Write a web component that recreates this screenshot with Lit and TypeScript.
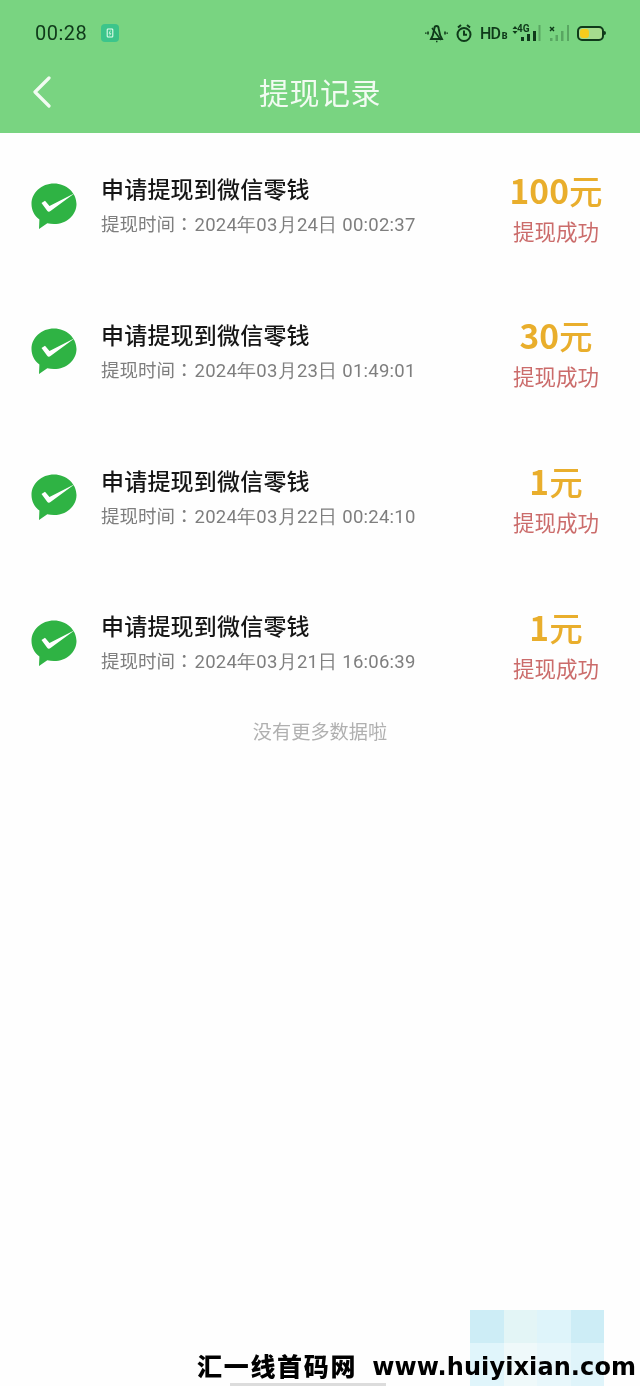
import { LitElement, html, css } from "lit";
import { customElement } from "lit/decorators.js";

const records = [
  { time: "2024年03月24日 00:02:37", amount: "100" },
  { time: "2024年03月23日 01:49:01", amount: "30" },
  { time: "2024年03月22日 00:24:10", amount: "1" },
  { time: "2024年03月21日 16:06:39", amount: "1" },
];

const wechat = html`<svg class="wx" viewBox="0 0 46 46" width="46" height="46">
  <path fill="#2fb344" d="M23 .5C10.500.5.500 9.600.500 21c0 6.300 3 11.800 7.900 15.600L8 46l8.300-5.700c2.100.5 4.400.8 6.700.8 12.500 0 22.500-9 22.500-20.100S35.500.5 23 .5z"/>
  <path fill="#fff" d="M10.500 20l3.500-2.200 4.500 5.300L44 10 19.500 28c-1.300 1-2.500.8-3.300-.3z"/>
</svg>`;

const statusIcons = html`<svg class="si" viewBox="0 0 150 24" width="150" height="24" fill="none" stroke="#0f3a1a">
  <g stroke-width="1.900">
    <path d="M6 18h11l-1.800-3.500-1.700-7.500a2 2 0 0 0-4 0l-1.700 7.500z"/>
    <path d="M7 7l9 12M11 20.500h1.500" stroke-width="1.600"/>
    <path d="M3 10.500v3M.8 11.500v1.200M20 10.500v3M22.200 11.500v1.200" stroke-width="1.600"/>
  </g>
  <g stroke-width="2">
    <circle cx="39" cy="13.500" r="6.500"/>
    <path d="M39 9.500v4.300h3M33 6.500l3-2.500M45 6.500l-3-2.500"/>
  </g>
  <g fill="#0f3a1a" stroke="none">
    <path d="M87.500 8l2.500-3 2.500 3zM87.500 10l2.500 3 2.500-3z"/>
    <rect x="96" y="16" width="3" height="4"/><rect x="102" y="13" width="3" height="7"/><rect x="108" y="10" width="3" height="10"/>
    <rect x="113.500" y="4" width="2" height="16" opacity=".3"/>
    <path d="M124.500 6.500l1-1 1.500 1.500 1.500-1.500 1 1-1.500 1.500 1.500 1.500-1 1-1.500-1.500-1.500 1.500-1-1 1.500-1.500z"/>
    <rect x="125" y="17" width="2.500" height="3" opacity=".3"/><rect x="130.500" y="14" width="2.500" height="6" opacity=".3"/><rect x="136" y="10" width="2.500" height="10" opacity=".3"/><rect x="142" y="4" width="2" height="16" opacity=".3"/>
  </g>
</svg>`;

@customElement("app-root")
export class AppRoot extends LitElement {
  static styles = css`
    :host {
      display: block;
      position: relative;
      width: 640px;
      height: 1386px;
      overflow: hidden;
      background: #fefefe;
      font-family: "Noto Sans CJK SC", "Noto Sans", sans-serif;
      filter: blur(0.3px);
    }
    header {
      height: 133px;
      background: #79d481;
      display: flex;
      flex-direction: column;
    }
    .status {
      height: 66px;
      display: flex;
      align-items: center;
      padding: 0 36px 0 35px;
      color: #0f3a1a;
    }
    .clock {
      font: 20px/24px Roboto, sans-serif;
      letter-spacing: 0.5px;
    }
    .pill {
      margin-left: 14px;
      width: 18px;
      height: 18px;
      border-radius: 4px;
      background: #3cc58b;
      display: flex;
      align-items: center;
      justify-content: center;
    }
    .spacer { flex: 1; }
    .icons { position: relative; display: flex; align-items: center; }
    .hd {
      position: absolute;
      left: 55px;
      top: 3px;
      font: 500 16px/20px Roboto, sans-serif;
      letter-spacing: -0.8px;
    }
    .hd small { font-size: 9px; font-weight: 900; margin-left: 1.500px; letter-spacing: 0; }
    .fourg {
      position: absolute;
      left: 92px;
      top: 2px;
      font: 700 10px/12px Roboto, sans-serif;
    }
    .battery {
      width: 21px;
      height: 9px;
      border: 2px solid #0f3a1a;
      border-radius: 5px;
      padding: 1px;
      margin: 1px 0 0 2px;
      position: relative;
      display: flex;
      background: #a5dc8e;
    }
    .battery::after {
      content: "";
      position: absolute;
      right: -3.500px;
      top: 2.500px;
      width: 1.500px;
      height: 4px;
      background: #0f3a1a;
      border-radius: 0 2px 2px 0;
    }
    .charge {
      width: 9px;
      background: #f6cb1c;
      border-radius: 3px;
    }
    .nav {
      position: relative;
      flex: 1;
      display: flex;
      align-items: center;
      justify-content: center;
      padding-bottom: 17px;
    }
    .back {
      position: absolute;
      left: 32px;
      top: 10px;
    }
    h1 {
      margin: 0;
      font-size: 30px;
      line-height: 40px;
      font-weight: 400;
      letter-spacing: 0.5px;
      color: #f2fbf2;
    }
    .row {
      height: 145.67px;
      display: flex;
      align-items: center;
      padding: 0 39px 0 31px;
      box-sizing: border-box;
    }
    .wx { flex: none; }
    .main { margin-left: 24px; flex: 1; }
    .title {
      font-size: 23px;
      line-height: 30px;
      font-weight: 500;
      letter-spacing: 0.2px;
      color: #161616;
      margin-bottom: 7px;
    }
    .time {
      font-size: 18.500px;
      line-height: 26px;
      color: #7e7e7e;
      white-space: nowrap;
    }
    .time .colon { font-family: "Noto Sans CJK TC", sans-serif; }
    .time .num { font-family: Roboto, sans-serif; letter-spacing: 0.25px; margin-left: 1px; }
    .side {
      width: 90px;
      display: flex;
      flex-direction: column;
      align-items: center;
      padding-top: 5px;
    }
    .amount {
      font-size: 33.500px;
      line-height: 38px;
      font-weight: 700;
      color: #e9ae2c;
      white-space: nowrap;
    }
    .amount span { font-weight: 500; }
    .state {
      font-size: 21.500px;
      line-height: 30px;
      color: #cb6c6b;
      margin-top: 7px;
    }
    .more {
      text-align: center;
      font-size: 19.200px;
      line-height: 24px;
      color: #b0b0b0;
      margin-top: 3px;
    }
    .tiles {
      position: absolute;
      left: 470px;
      top: 1310px;
      width: 134px;
      height: 76px;
      display: grid;
      grid-template-columns: repeat(4, 1fr);
      grid-template-rows: 33px 1fr;
    }
    .tiles i { display: block; }
    .mark {
      position: absolute;
      left: 197px;
      bottom: 4px;
      display: flex;
      align-items: flex-start;
      color: #000;
      white-space: nowrap;
    }
    .mark b {
      font-size: 25px;
      line-height: 30px;
      font-weight: 900;
      letter-spacing: 1.700px;
    }
    .mark span {
      margin: 2.500px 0 0 15px;
      font: 700 24px/30px "DejaVu Sans", sans-serif;
      letter-spacing: 0.1px;
    }
    .home {
      position: absolute;
      left: 230px;
      bottom: 0;
      width: 156px;
      height: 3px;
      background: #dcdcdc;
    }
  `;

  render() {
    const tiles = ["#cdedf6","#e3f5f6","#def4fa","#cdedf6","#e0f5fb","#eff9fa","#e8f7fb","#dff4fa"];
    return html`
      <header>
        <div class="status">
          <span class="clock">00:28</span>
          <span class="pill"><svg viewBox="0 0 10 12" width="8" height="10" fill="none" stroke="#e8fff0" stroke-width="1.300"><rect x="1.500" y="1" width="7" height="10" rx="1"/><path d="M5.500 3L4 6.500h2L4.500 9" stroke-width="1"/></svg></span>
          <span class="spacer"></span>
          <span class="icons">
            ${statusIcons}
            <span class="hd">HD<small>B</small></span>
            <span class="fourg">4G</span>
          </span>
          <span class="battery"><span class="charge"></span></span>
        </div>
        <div class="nav">
          <svg class="back" viewBox="0 0 20 32" width="20" height="32" fill="none" stroke="#f2fbf2" stroke-width="3.200" stroke-linecap="round" stroke-linejoin="round"><path d="M17 2L3 16l14 14"/></svg>
          <h1>提现记录</h1>
        </div>
      </header>
      <main>
        ${records.map(
          (r) => html`<div class="row">
            ${wechat}
            <div class="main">
              <div class="title">申请提现到微信零钱</div>
              <div class="time">提现时间<span class="colon">：</span><span class="num">${r.time}</span></div>
            </div>
            <div class="side">
              <div class="amount">${r.amount}<span>元</span></div>
              <div class="state">提现成功</div>
            </div>
          </div>`
        )}
        <div class="more">没有更多数据啦</div>
      </main>
      <div class="tiles">${tiles.map((c) => html`<i style="background:${c}"></i>`)}</div>
      <div class="mark"><b>汇一线首码网</b><span>www.huiyixian.com</span></div>
      <div class="home"></div>
    `;
  }
}
